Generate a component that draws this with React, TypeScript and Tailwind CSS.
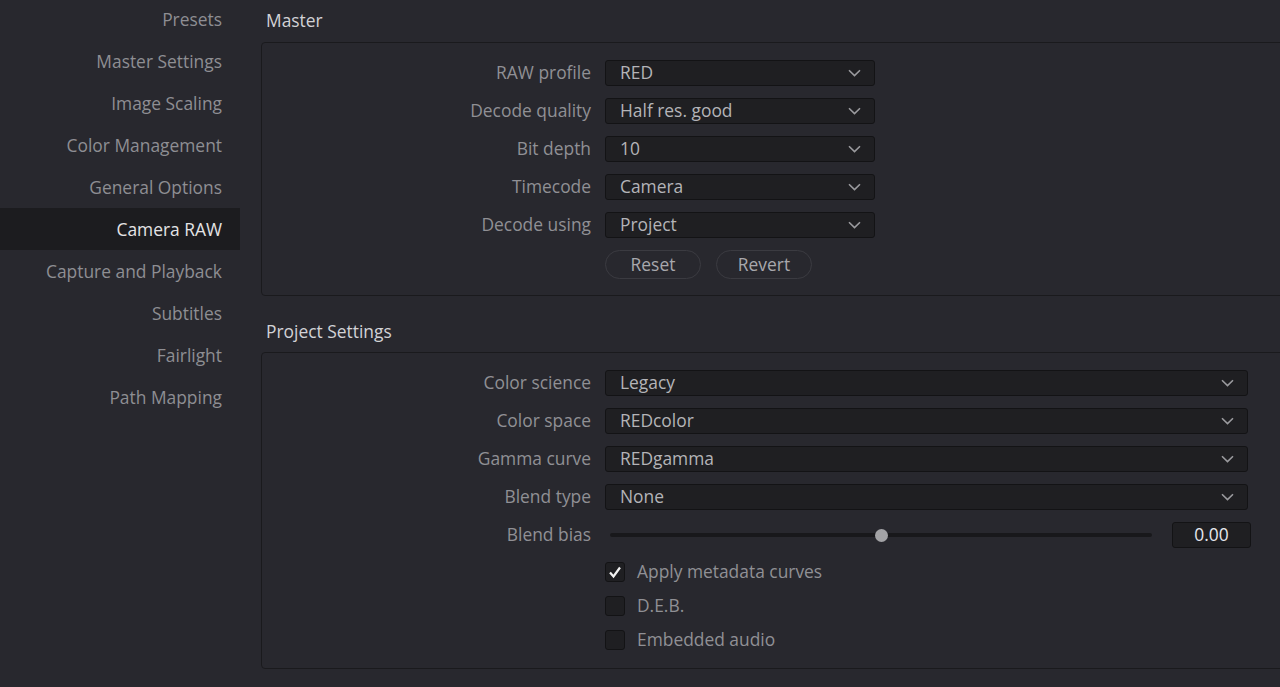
import { useState } from "react";

const navItems = [
  "Presets",
  "Master Settings",
  "Image Scaling",
  "Color Management",
  "General Options",
  "Camera RAW",
  "Capture and Playback",
  "Subtitles",
  "Fairlight",
  "Path Mapping",
];

const Chevron = () => (
  <svg width="13" height="8" viewBox="0 0 13 8" fill="none">
    <path d="M1 1.2 6.5 6.6 12 1.2" stroke="#9a9a9e" strokeWidth="1.6" />
  </svg>
);

const Select = ({ value, wide }: { value: string; wide?: boolean }) => (
  <div
    className={`flex items-center justify-between h-[26px] pl-[14px] pr-[13px] bg-[#1f1f22] border border-[#131315] rounded-[3px] text-[#b4b4b8] ${
      wide ? "w-[643px]" : "w-[270px]"
    }`}
  >
    <span className="leading-none -mt-[1px]">{value}</span>
    <Chevron />
  </div>
);

const Row = ({ label, children }: { label: string; children: React.ReactNode }) => (
  <div className="flex items-center gap-[14px]">
    <div className="w-[329px] text-right text-[#909095] leading-none -mt-[1px]">{label}</div>
    {children}
  </div>
);

const Checkbox = ({ label, checked }: { label: string; checked?: boolean }) => (
  <div className="flex items-center gap-[12px] pl-[343px] h-[20px]">
    <div className="w-[20px] h-[20px] bg-[#1f1f22] border border-[#131315] rounded-[3px] flex items-center justify-center">
      {checked && (
        <svg width="14" height="14" viewBox="0 0 14 14" fill="none">
          <path d="M2 7.5 5.5 11.5 12 2.5" stroke="#f2f2f2" strokeWidth="2.2" />
        </svg>
      )}
    </div>
    <span className="text-[#909095] leading-none">{label}</span>
  </div>
);

export default function App() {
  const [active, setActive] = useState("Camera RAW");

  return (
    <div className="w-[1280px] h-[687px] overflow-hidden bg-[#28282e] flex font-['Open_Sans',sans-serif] text-[17.4px]">
      {/* sidebar */}
      <nav className="w-[240px] shrink-0 flex flex-col -mt-[2px]">
        {navItems.map((item) => (
          <div
            key={item}
            onClick={() => setActive(item)}
            className={`h-[42px] shrink-0 flex items-center justify-end pr-[18px] cursor-pointer ${
              item === active ? "bg-[#1c1c1f] text-[#e4e4e6]" : "text-[#8e8e93]"
            }`}
          >
            {item}
          </div>
        ))}
      </nav>

      {/* content */}
      <main className="flex-1 pl-[21px] flex flex-col">
        <h2 className="pt-[8px] pb-[10px] pl-[5px] leading-[24px] text-[#d2d2d6]">Master</h2>
        <section className="w-[1060px] shrink-0 border border-[#1a1a1d] rounded-[4px] pt-[17px] pb-[16px] flex flex-col gap-[12px]">
          <Row label="RAW profile">
            <Select value="RED" />
          </Row>
          <Row label="Decode quality">
            <Select value="Half res. good" />
          </Row>
          <Row label="Bit depth">
            <Select value="10" />
          </Row>
          <Row label="Timecode">
            <Select value="Camera" />
          </Row>
          <Row label="Decode using">
            <Select value="Project" />
          </Row>
          <div className="flex gap-[15px] pl-[343px]">
            <button className="w-[96px] h-[29px] rounded-full border border-[#3b3b41] text-[#a8a8ad] leading-none">
              Reset
            </button>
            <button className="w-[96px] h-[29px] rounded-full border border-[#3b3b41] text-[#a8a8ad] leading-none">
              Revert
            </button>
          </div>
        </section>

        <h2 className="pt-[23px] pb-[9px] pl-[5px] leading-[24px] text-[#d2d2d6]">Project Settings</h2>
        <section className="w-[1060px] shrink-0 border border-[#1a1a1d] rounded-[4px] pt-[17px] pb-[18px] flex flex-col">
          <div className="flex flex-col gap-[12px]">
            <Row label="Color science">
              <Select value="Legacy" wide />
            </Row>
            <Row label="Color space">
              <Select value="REDcolor" wide />
            </Row>
            <Row label="Gamma curve">
              <Select value="REDgamma" wide />
            </Row>
            <Row label="Blend type">
              <Select value="None" wide />
            </Row>
            <Row label="Blend bias">
              <div className="flex items-center gap-[20px]">
                <div className="relative w-[542px] h-[4px] ml-[5px] rounded-full bg-[#18181b]">
                  <div className="absolute left-[265px] -top-[4.5px] w-[13px] h-[13px] rounded-full bg-[#a3a3a6]" />
                </div>
                <div className="w-[79px] h-[26px] flex items-center justify-center bg-[#1f1f22] border border-[#131315] rounded-[3px] text-[#e6e8ee] leading-none">
                  0.00
                </div>
              </div>
            </Row>
          </div>
          <div className="flex flex-col gap-[14px] mt-[14px]">
            <Checkbox label="Apply metadata curves" checked />
            <Checkbox label="D.E.B." />
            <Checkbox label="Embedded audio" />
          </div>
        </section>
      </main>
    </div>
  );
}
